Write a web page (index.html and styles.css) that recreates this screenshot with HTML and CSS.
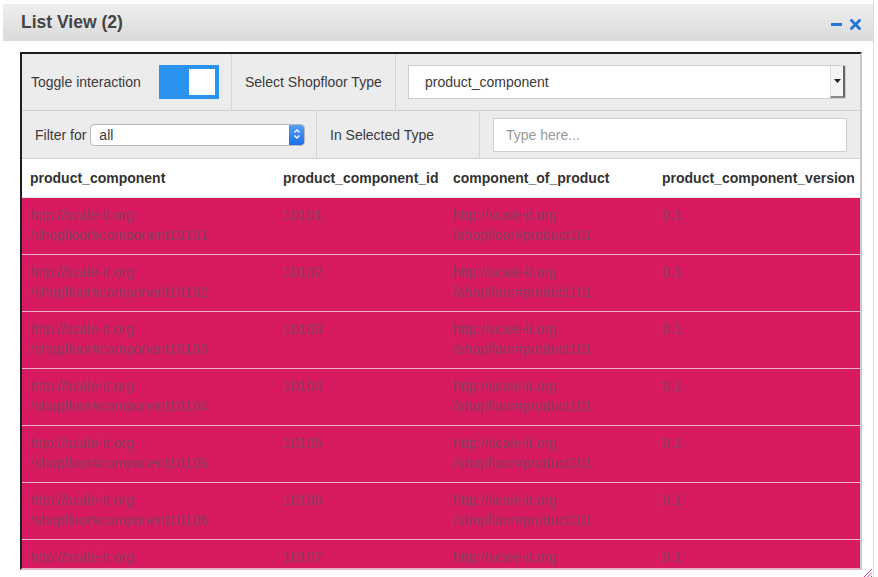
FILE: index.html
```html
<!DOCTYPE html>
<html>
<head>
<meta charset="utf-8">
<link rel="stylesheet" href="styles.css">
</head>
<body>
<div class="widget">
  <div class="titlebar">
    <span class="title">List View (2)</span>
    <span class="controls">
      <svg class="ico" width="11" height="11" viewBox="0 0 11 11"><rect x="0" y="4" width="11" height="3" fill="#2277d6"/></svg>
      <svg class="ico" width="11" height="11" viewBox="0 0 11 11"><path d="M1.5 1.5 L9.5 9.5 M9.5 1.5 L1.5 9.5" stroke="#2277d6" stroke-width="2.8" stroke-linecap="square"/></svg>
    </span>
  </div>
  <div class="body">
    <div class="box">
      <div class="toolrow row1">
        <div class="cell c11"><span>Toggle interaction</span><span class="toggle"><span class="knob"></span></span></div>
        <div class="cell c12">Select Shopfloor Type</div>
        <div class="cell c13"><div class="select1"><span>product_component</span><span class="drop"><svg width="7" height="4" viewBox="0 0 7 4"><path d="M0 0 H7 L3.5 4 Z" fill="#222"/></svg></span></div></div>
      </div>
      <div class="toolrow row2">
        <div class="cell c21"><span>Filter for</span><div class="select2"><span>all</span><span class="stepper"><svg width="8" height="12" viewBox="0 0 8 12"><path d="M1.5 4.5 L4 2 L6.5 4.5 M1.5 7.5 L4 10 L6.5 7.5" stroke="#fff" stroke-width="1.3" fill="none"/></svg></span></div></div>
        <div class="cell c22">In Selected Type</div>
        <div class="cell c23"><div class="input">Type here...</div></div>
      </div>
      <div class="grid head">
        <div>product_component</div>
        <div>product_component_id</div>
        <div>component_of_product</div>
        <div>product_component_version</div>
      </div>
      <div class="grid row"><div>http://scale-it.org<br>/shopfloor#component10101</div><div>10101</div><div>http://scale-it.org<br>/shopfloor#product101</div><div>0.1</div></div>
      <div class="grid row"><div>http://scale-it.org<br>/shopfloor#component10102</div><div>10102</div><div>http://scale-it.org<br>/shopfloor#product101</div><div>0.1</div></div>
      <div class="grid row"><div>http://scale-it.org<br>/shopfloor#component10103</div><div>10103</div><div>http://scale-it.org<br>/shopfloor#product101</div><div>0.1</div></div>
      <div class="grid row"><div>http://scale-it.org<br>/shopfloor#component10104</div><div>10104</div><div>http://scale-it.org<br>/shopfloor#product101</div><div>0.1</div></div>
      <div class="grid row"><div>http://scale-it.org<br>/shopfloor#component10105</div><div>10105</div><div>http://scale-it.org<br>/shopfloor#product101</div><div>0.1</div></div>
      <div class="grid row"><div>http://scale-it.org<br>/shopfloor#component10106</div><div>10106</div><div>http://scale-it.org<br>/shopfloor#product101</div><div>0.1</div></div>
      <div class="grid row last"><div>http://scale-it.org</div><div>10107</div><div>http://scale-it.org</div><div>0.1</div></div>
    </div>
    <svg class="resize" width="12" height="12" viewBox="0 0 12 12"><path d="M11 3 L3 11 M11 6.5 L6.5 11 M11 10 L10 11" stroke="#c23a9a" stroke-width="1"/></svg>
  </div>
</div>
</body>
</html>
```

FILE: styles.css
```css
* { box-sizing: border-box; }
html, body { margin: 0; padding: 0; background: #fff; }
body { font-family: "Liberation Sans", Arial, sans-serif; font-size: 14px; color: #333; }
.widget {
  margin-left: 3px;
  width: 871px;
  height: 577px;
  border-right: 1px solid #dcdcdc;
  padding-top: 4px;
}
.titlebar {
  height: 37px;
  background: linear-gradient(#efefef, #dadada);
  display: flex;
  align-items: center;
  justify-content: space-between;
  padding: 0 12px 0 18px;
}
.title { font-size: 17.5px; font-weight: bold; color: #444; }
.controls { display: flex; gap: 8px; margin-top: 3px; }
.ico { display: block; }
.body { position: relative; padding: 11px 0 0 17px; }
.box {
  width: 842px;
  height: 518px;
  border-top: 2px solid #1e1e1e;
  border-left: 2px solid #1e1e1e;
  border-right: 2px solid #c9c9c9;
  border-bottom: 2px solid #e6b4c6;
  overflow: hidden;
}
.toolrow {
  display: flex;
  background: #ececec;
  border-bottom: 1px solid #d2d2d2;
}
.row1 { height: 57px; }
.row2 { height: 48px; }
.cell {
  display: flex;
  align-items: center;
  border-right: 1px solid #d4d4d4;
  color: #3a3a3a;
}
.cell:last-child { border-right: 0; flex: 1; }
.c11 { width: 210px; padding: 0 12px 0 9px; justify-content: space-between; }
.c12 { width: 164px; padding-left: 13px; }
.c13 { padding: 0 14px 0 12px; }
.toggle {
  width: 60px; height: 34px; background: #2a93f0;
  display: flex; justify-content: flex-end; align-items: center; padding-right: 4px;
}
.knob { width: 26px; height: 26px; background: #fff; }
.select1 {
  flex: 1; height: 34px; background: #fff; border: 1px solid #cfcfcf;
  display: flex; align-items: center; justify-content: space-between; padding-left: 16px;
}
.drop {
  width: 15px; height: 32px; background: #f4f4f4; border-left: 1px solid #ddd;
  border-right: 2px solid #666; border-bottom: 2px solid #888;
  display: flex; align-items: center; justify-content: center;
}
.drop svg { display: block; }
.c21 { width: 295px; padding-left: 13px; }
.c22 { width: 163px; padding-left: 13px; }
.c23 { padding: 0 13px; }
.select2 {
  margin-left: 4px; width: 215px; height: 22px; background: #fff;
  border: 1px solid #b9b9b9; border-radius: 4px;
  display: flex; align-items: center; justify-content: space-between;
  padding-left: 8px; overflow: hidden;
}
.stepper {
  width: 16px; height: 22px; margin-top: -1px; margin-right: -1px;
  background: linear-gradient(#5ba3f8, #1a6fe8);
  border-radius: 0 4px 4px 0;
  display: flex; align-items: center; justify-content: center;
}
.stepper svg { display: block; }
.input {
  flex: 1; height: 34px; background: #fff; border: 1px solid #cfcfcf;
  display: flex; align-items: center; padding-left: 12px; color: #999;
}
.grid { display: grid; grid-template-columns: 253px 170px 209px 1fr; }
.grid > div { padding-left: 8px; }
.head { height: 39px; align-items: center; font-weight: bold; color: #333; background: #fff; border-bottom: 1px solid #e8e8e8; }
.row {
  background: #d81b60;
  color: #8a3d5e;
  line-height: 20px;
  padding-top: 7px;
  height: 57px;
  border-bottom: 1px solid #f3b7cd;
}
.row.last { border-bottom: 0; }
.resize { position: absolute; right: 0; bottom: -8px; }
```
